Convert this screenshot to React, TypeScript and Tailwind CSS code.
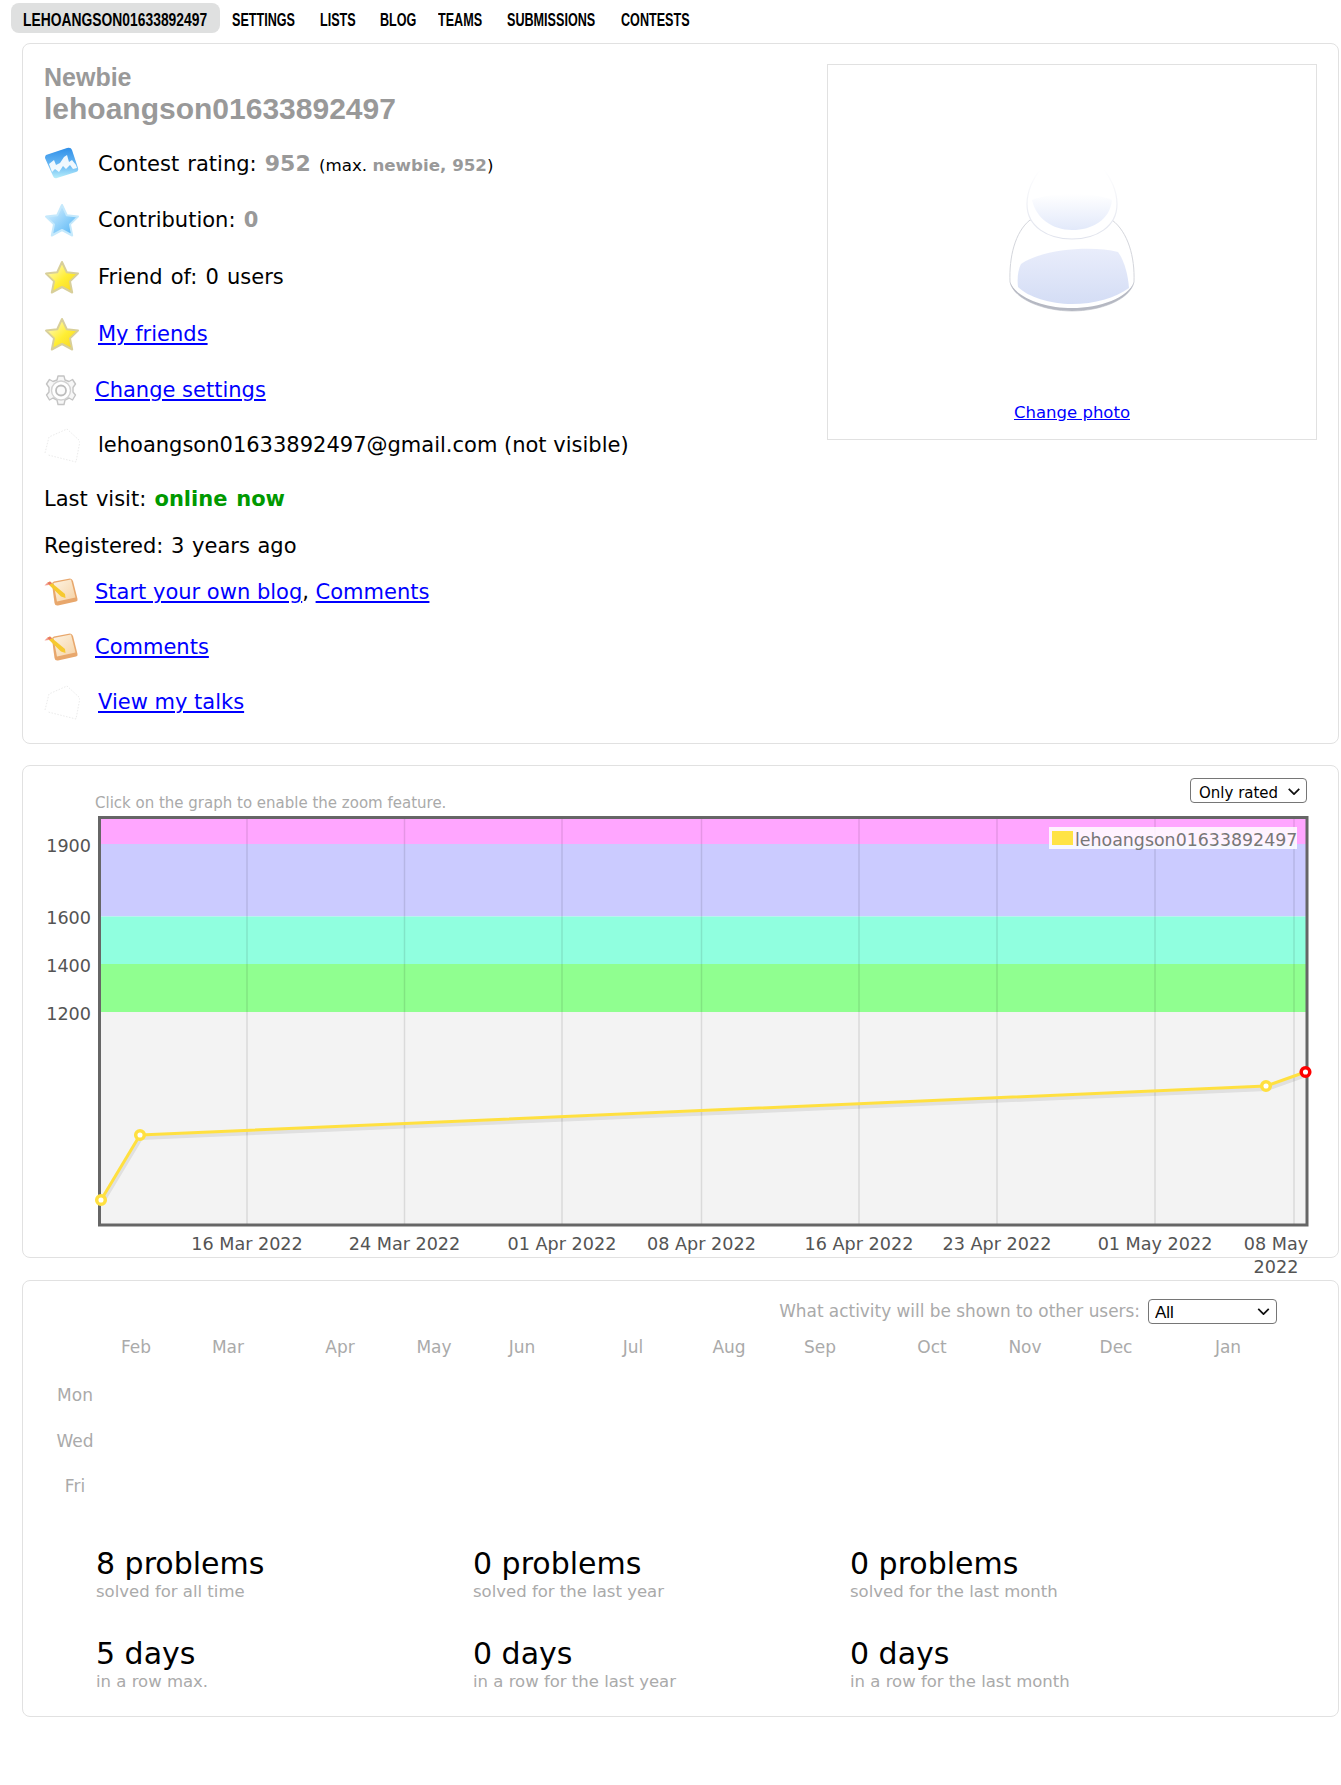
import React from "react";

function GraphIcon() {
  return (
    <svg width="36" height="34" viewBox="0 0 36 34" className="shrink-0">
      <defs>
        <linearGradient id="gi" x1="0" y1="0" x2="0" y2="1">
          <stop offset="0" stopColor="#2f8fe8" />
          <stop offset="0.6" stopColor="#6ebcf5" />
          <stop offset="1" stopColor="#b9effa" />
        </linearGradient>
      </defs>
      <path d="M2 9 L23 2 Q27 1 28 4 L34 22 Q35 25 32 26 L13 32 Q10 33 9 30 L1 12 Q1 10 2 9Z" fill="url(#gi)" />
      <path d="M5 18 L10 14 L12 19 L16 17 L20 11 L23 9 L25 16 L28 14 L32 19 L33 22 L29 23 L26 19 L22 23 L19 20 L15 26 L11 23 L8 26Z" fill="#ffffff" fillOpacity="0.9" />
    </svg>
  );
}

function StarIcon({ id, a, b, c, stroke }: { id: string; a: string; b: string; c: string; stroke: string }) {
  return (
    <svg width="36" height="35" viewBox="0 0 36 35" className="shrink-0">
      <defs>
        <linearGradient id={id} x1="0" y1="0" x2="1" y2="1">
          <stop offset="0" stopColor={a} />
          <stop offset="0.55" stopColor={b} />
          <stop offset="1" stopColor={c} />
        </linearGradient>
      </defs>
      <path
        d="M18 2 L22.8 12.2 L34 13.6 L26 21.4 L28.2 32.5 L18 27 L7.8 32.5 L10 21.4 L2 13.6 L13.2 12.2Z"
        fill={`url(#${id})`}
        stroke={stroke}
        strokeWidth="2"
        strokeLinejoin="round"
      />
    </svg>
  );
}

function GearIcon() {
  return (
    <svg width="34" height="33" viewBox="0 0 34 33" className="shrink-0">
      <g fill="#f7f7f7" stroke="#c4c4c4" strokeWidth="1.4" strokeLinejoin="round">
        <path d="M14 2 h6 l1 4 l4 1.5 l3.5-2 l3 4.5 l-2.5 3.5 v4.5 l2.5 3 l-3 5 l-3.5-2 l-4 2 l-1 4.5 h-6 l-1-4.5 l-4-2 l-3.5 2 l-3-5 l2.5-3 v-4.5 l-2.5-3.5 l3-4.5 l3.5 2 l4-1.5z" />
        <circle cx="17" cy="16.5" r="9.5" fill="#ffffff" stroke="#d2d2d2" />
        <circle cx="17" cy="16.5" r="5" fill="#fbfbfb" stroke="#bdbdbd" strokeWidth="1.8" />
      </g>
    </svg>
  );
}

function FaintIcon() {
  return (
    <svg width="36" height="35" viewBox="0 0 36 35" className="shrink-0">
      <path d="M1 25 L5 9 L23 1 L36 13 L32 34 L4 27" fill="none" stroke="#ebebeb" strokeDasharray="1.5 1.5" />
    </svg>
  );
}

function NoteIcon({ id }: { id: string }) {
  return (
    <svg width="34" height="28" viewBox="0 0 34 28" className="shrink-0">
      <defs>
        <linearGradient id={id} x1="0" y1="0" x2="1" y2="1">
          <stop offset="0" stopColor="#fdf3e2" />
          <stop offset="1" stopColor="#f6d3a6" />
        </linearGradient>
      </defs>
      <path d="M8 6 Q8 4 10 3.5 L26 0.5 Q28 0.5 29 3 L33.5 21 Q34 23 32 23.5 L14 27.5 Q11 28 10.5 25Z" fill="#e8a76c" />
      <path d="M9.5 5 L27 1.5 L31.5 19.5 L13 23.5Z" fill={`url(#${id})`} />
      <path d="M3 5 L6 3.5 L21 16 L21.5 20 L17 18.5Z" fill="#f6c92f" />
      <path d="M3 5 L6 3.5 L8 5.2 L5 7Z" fill="#e8766a" />
      <path d="M0.5 7.5 L3 5 L5 7 Z" fill="#f29a8e" />
    </svg>
  );
}

function Row({ mt, icon, gap, wide, children }: { mt: string; icon: React.ReactNode; gap: string; wide?: boolean; children: React.ReactNode }) {
  return (
    <div className={`flex h-9 items-center ${mt}`}>
      <div className={`flex shrink-0 items-center ${gap}`}>{icon}</div>
      <div className={`pt-[2px] ${wide ? "[word-spacing:1.5px]" : ""}`}>{children}</div>
    </div>
  );
}

function A({ children }: { children: React.ReactNode }) {
  return <a className="text-[#0000ff] underline">{children}</a>;
}

function Gray({ children, cls }: { children: React.ReactNode; cls?: string }) {
  return <span className={`font-bold text-[#999999] ${cls ?? ""}`}>{children}</span>;
}

function NavItem({ w, children, active }: { w: string; children: string; active?: boolean }) {
  return (
    <span className={`h-[30px] shrink-0 whitespace-nowrap px-3 ${active ? "rounded-lg bg-[#dfe0e0]" : ""}`}>
      <span className={`block ${w}`}>
        <span className={`inline-block origin-left ${active ? "scale-x-[0.77]" : "scale-x-[0.7]"}`}>{children}</span>
      </span>
    </span>
  );
}

function Chevron({ cls }: { cls: string }) {
  return (
    <svg viewBox="0 0 14 8" className={`pointer-events-none absolute ${cls}`}>
      <path d="M1 1 L7 7 L13 1" fill="none" stroke="#111111" strokeWidth="2" />
    </svg>
  );
}

const vlines = [247, 404.5, 562, 701.5, 859, 997, 1155, 1294];
const xlabels: [number, string][] = [
  [247, "16 Mar 2022"],
  [404.5, "24 Mar 2022"],
  [562, "01 Apr 2022"],
  [701.5, "08 Apr 2022"],
  [859, "16 Apr 2022"],
  [997, "23 Apr 2022"],
  [1155, "01 May 2022"],
];
const ylabels: [number, string][] = [
  [853, "1900"],
  [924.5, "1600"],
  [973, "1400"],
  [1021, "1200"],
];

function Chart() {
  const line = "101,1201 140,1136 1266,1087 1305.5,1073";
  return (
    <svg viewBox="23 803 1315 454" className="block h-[454px] w-[1315px] overflow-visible">
      <rect x="100" y="819" width="1207" height="26" fill="#ffa6ff" />
      <rect x="100" y="845" width="1207" height="72.5" fill="#cbcbff" />
      <rect x="100" y="917.5" width="1207" height="47.5" fill="#90ffdf" />
      <rect x="100" y="965" width="1207" height="48" fill="#90ff90" />
      <rect x="100" y="1013" width="1207" height="213" fill="#f3f3f3" />
      {vlines.map((x) => (
        <line key={x} x1={x} x2={x} y1="819" y2="1226" stroke="#000000" strokeOpacity="0.1" strokeWidth="1.5" />
      ))}
      <rect x="99.5" y="818.5" width="1207.5" height="407.5" fill="none" stroke="#666666" strokeWidth="3" />
      <polyline points="102,1204 141,1139 1267,1090 1306,1076" fill="none" stroke="#000000" strokeOpacity="0.08" strokeWidth="4" />
      <polyline points={line} fill="none" stroke="#ffe040" strokeWidth="3" strokeLinejoin="round" />
      <circle cx="101" cy="1201" r="4.3" fill="#ffffff" stroke="#ffe040" strokeWidth="3.5" />
      <circle cx="140" cy="1136" r="4.3" fill="#ffffff" stroke="#ffe040" strokeWidth="3.5" />
      <circle cx="1266" cy="1087" r="4.3" fill="#ffffff" stroke="#ffe040" strokeWidth="3.5" />
      <circle cx="1305.5" cy="1073" r="4.3" fill="#ffffff" stroke="#ff0000" strokeWidth="3.5" />
      <g fontSize="17.6" fill="#545454">
        {ylabels.map(([y, t]) => (
          <text key={t} x="91" y={y} textAnchor="end">
            {t}
          </text>
        ))}
        {xlabels.map(([x, t]) => (
          <text key={t} x={x} y="1251" textAnchor="middle">
            {t}
          </text>
        ))}
        <text x="1276" y="1251" textAnchor="middle">
          08 May
        </text>
        <text x="1276" y="1274" textAnchor="middle">
          2022
        </text>
      </g>
      <rect x="1049" y="828" width="248" height="22" fill="#ffffff" fillOpacity="0.85" />
      <rect x="1052" y="832" width="21" height="14" fill="#ffe345" />
      <text x="1075" y="847" fontSize="17.4" fill="#777777">
        lehoangson01633892497
      </text>
    </svg>
  );
}

const months: [number, string][] = [
  [136, "Feb"],
  [228, "Mar"],
  [340, "Apr"],
  [434, "May"],
  [522, "Jun"],
  [633, "Jul"],
  [729, "Aug"],
  [820, "Sep"],
  [932, "Oct"],
  [1025, "Nov"],
  [1116, "Dec"],
  [1228, "Jan"],
];
const days: [number, string][] = [
  [1396, "Mon"],
  [1442, "Wed"],
  [1487, "Fri"],
];

function Calendar() {
  return (
    <svg viewBox="23 1324 1315 222" className="block h-[222px] w-[1315px]">
      <g fontSize="17" fill="#aaaaaa">
        {months.map(([x, t]) => (
          <text key={t} x={x} y="1353" textAnchor="middle">
            {t}
          </text>
        ))}
        {days.map(([y, t]) => (
          <text key={t} x="75" y={y + 5} textAnchor="middle">
            {t}
          </text>
        ))}
      </g>
    </svg>
  );
}

function Stat({ big, small }: { big: string; small: string }) {
  return (
    <div>
      <div className="h-[34px] text-[30px] leading-[35px] text-black">{big}</div>
      <div className="h-6 text-[16.5px] leading-6 text-[#aaaaaa]">{small}</div>
    </div>
  );
}

const cardCls = "ml-[22px] w-[1317px] rounded-lg border border-[#e1e1e1]";

export default function App() {
  return (
    <div className="min-h-[1785px] w-[1341px] bg-white pb-[60px] font-['DejaVu_Sans',sans-serif] text-[21px] text-black">
      <nav className="flex h-[43px] items-start pl-[11px] pt-[3px] font-['Liberation_Sans',sans-serif] text-[18px] font-bold leading-[35px] text-black">
        <NavItem w="w-[185px]" active>LEHOANGSON01633892497</NavItem>
        <NavItem w="w-[64px]">SETTINGS</NavItem>
        <NavItem w="w-[36px]">LISTS</NavItem>
        <NavItem w="w-[34px]">BLOG</NavItem>
        <NavItem w="w-[45px]">TEAMS</NavItem>
        <NavItem w="w-[90px]">SUBMISSIONS</NavItem>
        <NavItem w="w-[68px]">CONTESTS</NavItem>
      </nav>

      <section className={`${cardCls} flex h-[701px] justify-between pl-[21px] pr-[21px] pt-5`}>
        <div>
          <div className="font-['Liberation_Sans',sans-serif] font-bold text-[#999999]">
            <div className="h-7 text-[25px] leading-[26px]">Newbie</div>
            <div className="h-[34px] text-[30px] leading-[34px]">lehoangson01633892497</div>
          </div>
          <Row mt="mt-[19px]" gap="w-[54px]" wide icon={<GraphIcon />}>
            Contest rating: <Gray cls="text-[22px]">952</Gray>{" "}
            <span className="text-[16.7px] [word-spacing:0px]">
              (max. <Gray>newbie, 952</Gray>)
            </span>
          </Row>
          <Row mt="mt-[21px]" gap="w-[54px]" wide icon={<StarIcon id="s1" a="#e6f6ff" b="#8fd0fa" c="#4fb0f2" stroke="#c5e9fc" />}>
            Contribution: <Gray>0</Gray>
          </Row>
          <Row mt="mt-[21px]" gap="w-[54px]" wide icon={<StarIcon id="s2" a="#fffde0" b="#ffee33" c="#f5cf2a" stroke="#d8cf9a" />}>
            Friend of: 0 users
          </Row>
          <Row mt="mt-[21px]" gap="w-[54px]" icon={<StarIcon id="s3" a="#fffde0" b="#ffee33" c="#f5cf2a" stroke="#d8cf9a" />}>
            <A>My friends</A>
          </Row>
          <Row mt="mt-5" gap="w-[51px]" icon={<GearIcon />}>
            <A>Change settings</A>
          </Row>
          <Row mt="mt-[19px]" gap="w-[54px]" icon={<FaintIcon />}>
            lehoangson01633892497@gmail.com (not visible)
          </Row>
          <div className="mt-[18px] flex h-9 items-center pt-[2px] [word-spacing:1.5px]">
            <span>
              Last visit: <span className="font-bold text-[#009900]">online now</span>
            </span>
          </div>
          <div className="mt-[11px] flex h-9 items-center pt-[2px] [word-spacing:1px]">Registered: 3 years ago</div>
          <Row mt="mt-[10px]" gap="w-[51px]" icon={<NoteIcon id="n1" />}>
            <A>Start your own blog</A>, <A>Comments</A>
          </Row>
          <Row mt="mt-[19px]" gap="w-[51px]" icon={<NoteIcon id="n2" />}>
            <A>Comments</A>
          </Row>
          <Row mt="mt-[19px]" gap="w-[54px]" icon={<FaintIcon />}>
            <A>View my talks</A>
          </Row>
        </div>

        <div className="flex h-[376px] w-[490px] flex-col items-center border border-[#e1e1e1] pt-[102px]">
          <svg viewBox="1007 165 130 146" className="h-[146px] w-[130px]">
            <defs>
              <linearGradient id="av1" x1="0" y1="0" x2="0" y2="1">
                <stop offset="0" stopColor="#ffffff" />
                <stop offset="1" stopColor="#e2e9fa" />
              </linearGradient>
              <linearGradient id="av2" x1="0" y1="0" x2="0" y2="1">
                <stop offset="0" stopColor="#e9edfb" />
                <stop offset="1" stopColor="#d4ddf5" />
              </linearGradient>
              <linearGradient id="av3" x1="0" y1="0" x2="0" y2="1">
                <stop offset="0" stopColor="#ffffff" />
                <stop offset="0.35" stopColor="#f3f4f8" />
                <stop offset="1" stopColor="#dfe2ec" />
              </linearGradient>
            </defs>
            <path d="M1030 218 C1015 230 1009 255 1010 280 C1014 298 1045 309 1072 309 C1100 309 1130 298 1134 280 C1135 255 1128 230 1112 218Z" fill="#ffffff" stroke="#d4d6dc" strokeWidth="1" />
            <path d="M1010 280 C1014 298 1045 309 1072 309 C1100 309 1130 298 1134 280 C1128 296 1100 306 1072 306 C1045 306 1016 296 1010 280Z" fill="#b5b8c2" />
            <path d="M1021 262 C1040 248 1090 243 1118 250 C1124 258 1128 272 1129 286 C1115 296 1095 302 1072 302 C1050 302 1028 295 1018 285 C1017 276 1018 268 1021 262Z" fill="url(#av2)" />
            <path d="M1027 202 C1027 225 1048 237 1072 237 C1096 237 1117 225 1117 202 C1117 188 1110 175 1104 168 L1040 168 C1034 175 1027 188 1027 202Z" fill="#ffffff" stroke="url(#av3)" strokeWidth="1.2" />
            <path d="M1032 198 C1050 190 1095 190 1112 198 C1110 218 1092 228 1072 228 C1052 228 1036 216 1032 198Z" fill="url(#av1)" />
          </svg>
          <a className="mt-[88px] text-[16.5px] leading-6 text-[#0000ff] underline">Change photo</a>
        </div>
      </section>

      <section className={`${cardCls} mt-[21px] h-[493px]`}>
        <div className="flex h-[36px] items-end justify-between pl-[72px] pr-[31px]">
          <span className="translate-y-[11px] text-[15px] leading-5 text-[#aaaaaa]">Click on the graph to enable the zoom feature.</span>
          <div className="relative h-[25px] w-[117px] translate-y-px">
            <select className="block h-[25px] w-[117px] appearance-none rounded border border-[#767676] bg-white pl-[8px] pt-[3px] text-[15px] text-black">
              <option>Only rated</option>
            </select>
            <Chevron cls="right-[6px] top-[10px] h-[7px] w-[14px]" />
          </div>
        </div>
        <Chart />
      </section>

      <section className={`${cardCls} mt-[22px] h-[437px]`}>
        <div className="flex h-[43px] items-end justify-end gap-2 pr-[61px]">
          <span className="text-[16.9px] leading-[25px] text-[#aaaaaa]">What activity will be shown to other users:</span>
          <div className="relative h-[25px] w-[129px]">
            <select className="block h-[25px] w-[129px] appearance-none rounded border border-[#767676] bg-white pl-[6px] font-['Liberation_Sans',sans-serif] text-[17px] text-black">
              <option>All</option>
            </select>
            <Chevron cls="right-[7px] top-[9px] h-[7px] w-[13px]" />
          </div>
        </div>
        <Calendar />
        <div className="grid grid-cols-[377px_377px_377px] gap-y-8 pl-[73px]">
          <Stat big="8 problems" small="solved for all time" />
          <Stat big="0 problems" small="solved for the last year" />
          <Stat big="0 problems" small="solved for the last month" />
          <Stat big="5 days" small="in a row max." />
          <Stat big="0 days" small="in a row for the last year" />
          <Stat big="0 days" small="in a row for the last month" />
        </div>
      </section>
    </div>
  );
}
